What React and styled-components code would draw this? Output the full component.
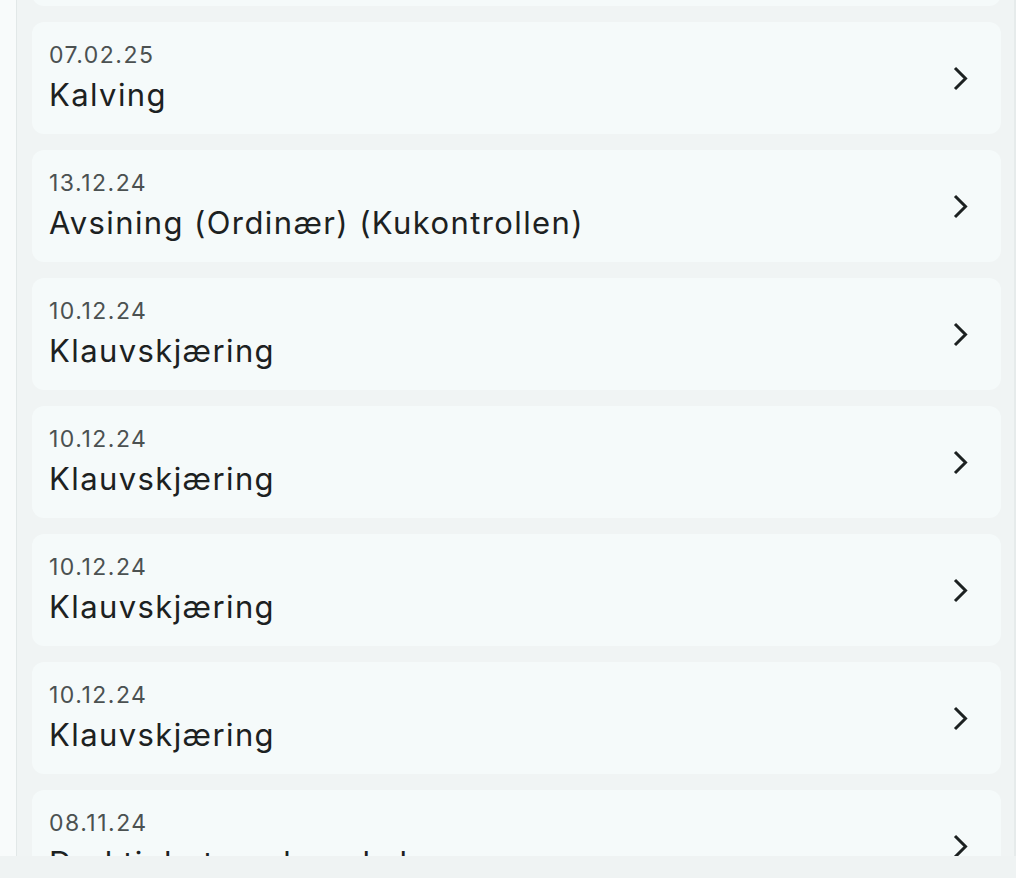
import React from "react";
import styled, { createGlobalStyle } from "styled-components";

const GlobalStyle = createGlobalStyle`
  html, body {
    margin: 0;
    padding: 0;
    background: #f8fbfb;
    font-family: Inter, "Noto Sans", "Liberation Sans", sans-serif;
  }
  * { box-sizing: border-box; }
`;

const Page = styled.div`
  width: 1016px;
  height: 878px;
  display: flex;
  flex-direction: column;
  overflow: hidden;
`;

const Main = styled.div`
  flex: 1;
  display: flex;
  min-height: 0;
  padding-left: 16px;
  background: #f8fbfb;
`;

const Panel = styled.div`
  flex: 1;
  background: #f0f4f4;
  border-left: 1px solid #e2e8e8;
  border-right: 2px solid #e6ebeb;
  overflow: hidden;
  padding: 0 13px 0 15px;
`;

const List = styled.ul`
  list-style: none;
  margin: -106px 0 0;
  padding: 0;
  display: flex;
  flex-direction: column;
  gap: 16px;
`;

const Card = styled.li`
  height: 112px;
  background: #f5fafa;
  border-radius: 12px;
  display: flex;
  align-items: center;
  padding: 0 32px 0 17px;
  cursor: pointer;
`;

const Texts = styled.div`
  flex: 1;
  display: flex;
  flex-direction: column;
  gap: 8px;
  padding-bottom: 2px;
`;

const DateLabel = styled.span`
  font-size: 23px;
  line-height: 28px;
  letter-spacing: 1.5px;
  color: #4b5151;
`;

const Title = styled.span`
  font-size: 31px;
  line-height: 36px;
  letter-spacing: 1.4px;
  color: #1c2121;
`;

const Chevron = styled.svg`
  width: 17px;
  height: 25px;
  flex-shrink: 0;
  fill: none;
  stroke: #1c2121;
  stroke-width: 3px;
`;

const Footer = styled.div`
  height: 22px;
  flex-shrink: 0;
  background: #eff3f3;
`;

const events = [
  { date: "14.02.25", title: "Inseminering" },
  { date: "07.02.25", title: "Kalving" },
  { date: "13.12.24", title: "Avsining (Ordinær) (Kukontrollen)" },
  { date: "10.12.24", title: "Klauvskjæring" },
  { date: "10.12.24", title: "Klauvskjæring" },
  { date: "10.12.24", title: "Klauvskjæring" },
  { date: "10.12.24", title: "Klauvskjæring" },
  { date: "08.11.24", title: "Drektighetsundersøkelse" },
];

export default function App() {
  return (
    <>
      <GlobalStyle />
      <Page>
        <Main>
          <Panel>
            <List>
              {events.map((e, i) => (
                <Card key={i}>
                  <Texts>
                    <DateLabel>{e.date}</DateLabel>
                    <Title>{e.title}</Title>
                  </Texts>
                  <Chevron viewBox="0 0 17 25">
                    <polyline points="3 2 13.5 12.5 3 23" />
                  </Chevron>
                </Card>
              ))}
            </List>
          </Panel>
        </Main>
        <Footer />
      </Page>
    </>
  );
}
